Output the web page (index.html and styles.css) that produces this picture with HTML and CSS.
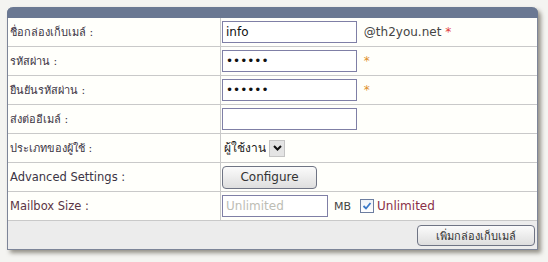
FILE: index.html
```html
<!DOCTYPE html>
<html lang="th">
<head>
    <meta charset="UTF-8">
    <meta name="viewport" content="width=device-width, initial-scale=1.0">
    <title>เพิ่มกล่องเก็บเมล์</title>
    <link rel="stylesheet" href="styles.css">
</head>
<body>

<div class="mailbox-panel">
    <div class="panel-head"></div>
    <form action="#" method="post">
        <table class="form-table">
            <tr>
                <td class="label">ชื่อกล่องเก็บเมล์ :</td>
                <td class="field">
                    <input type="text" class="text-input" name="mailbox" value="info">
                    <span class="domain">@th2you.net</span>
                    <span class="req red">*</span>
                </td>
            </tr>
            <tr>
                <td class="label">รหัสผ่าน :</td>
                <td class="field">
                    <input type="password" class="text-input" name="password" value="123456">
                    <span class="req">*</span>
                </td>
            </tr>
            <tr>
                <td class="label">ยืนยันรหัสผ่าน :</td>
                <td class="field">
                    <input type="password" class="text-input" name="confirm" value="123456">
                    <span class="req">*</span>
                </td>
            </tr>
            <tr>
                <td class="label">ส่งต่ออีเมล์ :</td>
                <td class="field">
                    <input type="text" class="text-input" name="forward">
                </td>
            </tr>
            <tr>
                <td class="label">ประเภทของผู้ใช้ :</td>
                <td class="field">
                    <div class="select-box">
                        <select name="usertype">
                            <option>ผู้ใช้งาน</option>
                        </select>
                        <span class="select-arrow">
                            <svg width="9" height="6" viewBox="0 0 9 6"><path d="M1 1 L4.5 4.5 L8 1" fill="none" stroke="#111" stroke-width="2"/></svg>
                        </span>
                    </div>
                </td>
            </tr>
            <tr>
                <td class="label">Advanced Settings :</td>
                <td class="field">
                    <button type="button" class="btn configure-btn">Configure</button>
                </td>
            </tr>
            <tr>
                <td class="label maroon">Mailbox Size :</td>
                <td class="field">
                    <div class="size-group">
                        <input type="text" class="text-input size-input" name="size" placeholder="Unlimited" disabled>
                        <span class="unit">MB</span>
                        <label class="unlimited">
                            <span class="check-box">
                                <svg width="10" height="10" viewBox="0 0 10 10"><path d="M1.5 5 L4 7.5 L8.5 2" fill="none" stroke="#3a78c8" stroke-width="1.8"/></svg>
                            </span>
                            Unlimited
                        </label>
                    </div>
                </td>
            </tr>
        </table>
        <div class="panel-foot">
            <button type="submit" class="btn add-btn">เพิ่มกล่องเก็บเมล์</button>
        </div>
    </form>
</div>

</body>
</html>
```

FILE: styles.css
```css
body {
    margin: 0;
    padding: 7px 0 0 7px;
    background-color: #f4f4f1;
    border-top: 3px solid #e6e3dc;
    font-family: "DejaVu Sans", "Noto Sans", sans-serif;
    font-size: 12px;
    color: #333;
    box-sizing: border-box;
    height: 262px;
    margin-top: -3px;
}
.mailbox-panel {
    width: 529px;
    border: 1px solid #7d8598;
    border-top: none;
    border-radius: 6px 6px 0 0;
    background-color: #fffffb;
    box-shadow: 3px 3px 4px rgba(70, 64, 50, 0.55);
}
.panel-head {
    height: 11px;
    background-color: #6a7892;
    border-radius: 6px 6px 0 0;
    margin: 0 -1px;
}
.mailbox-panel form {
    margin: 0;
}
.form-table {
    width: 100%;
    border-collapse: collapse;
}
.form-table td {
    border-bottom: 1px solid #c9c9c9;
    height: 28px;
    padding: 0;
}
.form-table .label {
    width: 210px;
    padding-left: 2px;
    border-right: 1px solid #c9c9c9;
    font-size: 11px;
    color: #3b3444;
}
.form-table .label.maroon {
    color: #5a3444;
    font-size: 11.5px;
}
.form-table tr:nth-child(6) .label {
    font-size: 11.5px;
}
.form-table .field {
    padding-left: 1px;
}
.text-input {
    width: 135px;
    height: 22px;
    box-sizing: border-box;
    border: 1px solid #7f7fa6;
    padding: 0 3px;
    font-family: "DejaVu Sans", sans-serif;
    font-size: 12px;
    color: #111;
    background-color: #fff;
    vertical-align: middle;
}
.text-input:disabled {
    background-color: #fff;
}
.text-input::placeholder {
    color: #bdbdb5;
}
.domain {
    margin-left: 3px;
    color: #444;
    vertical-align: middle;
}
.req {
    color: #e0902c;
    margin-left: 3px;
    vertical-align: middle;
}
.req.red {
    color: #e23a3a;
    margin-left: 0;
}
.select-box {
    display: flex;
    align-items: center;
}
.select-box select {
    appearance: none;
    border: none;
    background: none;
    padding: 0 0 0 2px;
    font-family: "DejaVu Sans", "Noto Sans", sans-serif;
    font-size: 12px;
    color: #222;
}
.select-arrow {
    display: flex;
    align-items: center;
    justify-content: center;
    width: 14px;
    height: 15px;
    margin-left: 3px;
    background-color: #e4e4e4;
    border: 1px solid #c4c4c4;
}
.btn {
    font-family: "DejaVu Sans", "Noto Sans", sans-serif;
    color: #333;
    border: 1px solid #6f7484;
    border-radius: 4px;
    background: linear-gradient(#fbfbfb, #dedede);
    cursor: pointer;
}
.configure-btn {
    width: 95px;
    height: 23px;
    font-size: 12px;
    vertical-align: middle;
}
.size-group {
    display: flex;
    align-items: center;
}
.size-input {
    width: 106px;
}
.unit {
    margin-left: 6px;
    font-size: 11px;
    color: #444;
}
.unlimited {
    display: flex;
    align-items: center;
    margin-left: 9px;
    font-size: 12px;
    color: #8a3048;
}
.check-box {
    display: flex;
    align-items: center;
    justify-content: center;
    width: 12px;
    height: 12px;
    margin-right: 3px;
    border: 1px solid #6d7ea0;
    background: linear-gradient(#eef2f8, #fff);
}
.panel-foot {
    display: flex;
    justify-content: flex-end;
    height: 29px;
    padding: 4px 2px 0 0;
    box-sizing: border-box;
    background-color: #ececec;
    border-bottom: 1px solid #7d8598;
    margin-bottom: -1px;
}
.add-btn {
    width: 118px;
    height: 21px;
    font-size: 11px;
}
```
